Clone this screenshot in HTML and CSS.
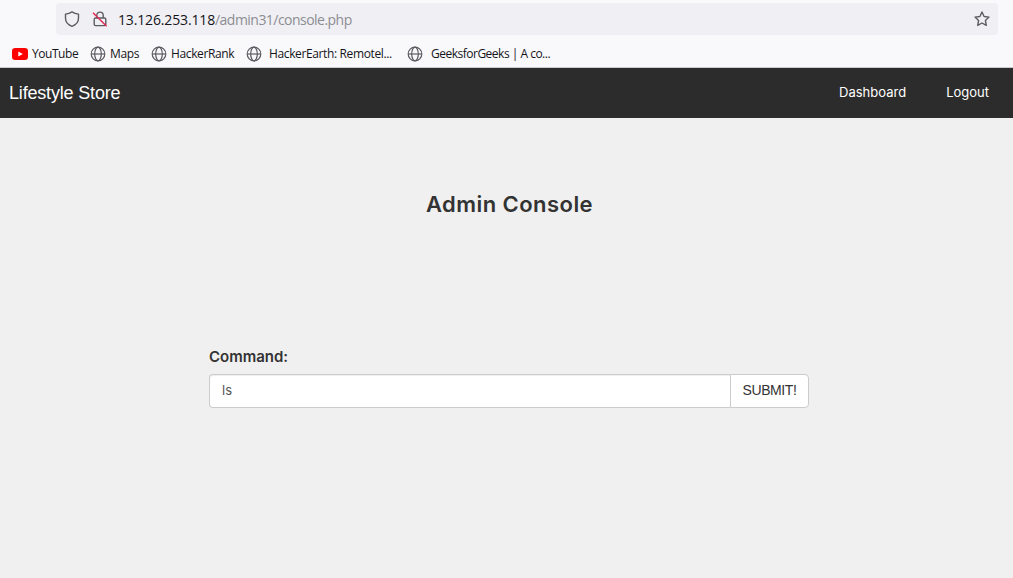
FILE: index.html
```
<!DOCTYPE html>
<html lang="en">
<head>
<meta charset="utf-8">
<title>Admin Console</title>
<link rel="stylesheet" href="styles.css">
</head>
<body>
<svg class="defs" aria-hidden="true">
  <symbol id="globe" viewBox="0 0 16 16"><g fill="none" stroke="#5b5b62" stroke-width="1.2"><circle cx="8" cy="8" r="6.8"/><ellipse cx="8" cy="8" rx="3.3" ry="6.8"/><path d="M1.2 8h13.600"/></g></symbol>
</svg>
<div class="toolbar">
  <div class="urlbar">
    <svg class="shield" viewBox="0 0 16 16"><path d="M8 .9c2 1.400 4 2 6.500 2.200v3.900c0 4-2.500 6.900-6.500 8.300C4 13.900 1.500 11 1.500 7V3.100C4 2.900 6 2.300 8 .9z"/></svg>
    <svg class="lock" viewBox="0 0 16 16"><path d="M4.800 7V4.300a3.200 3.200 0 0 1 6.400 0V7M3.600 7h8.800q1.400 0 1.400 1.400v4.800q0 1.400-1.400 1.400H3.600q-1.400 0-1.400-1.400V8.400Q2.200 7 3.600 7z"/><path class="slash" d="M1 1.800l13.600 13.400"/></svg>
    <div class="address"><span class="host">13.126.253.118</span><span class="path">/admin31/console.php</span></div>
    <svg class="star" viewBox="0 0 16 16"><path d="M8 1l2.100 4.500 4.900.6-3.600 3.400.9 4.900L8 12l-4.300 2.400.9-4.900L1 6.100l4.900-.6z"/></svg>
  </div>
</div>
<div class="bookmarks">
  <div class="bookmark youtube"><svg viewBox="0 0 16 16"><rect y="2" width="16" height="12" rx="3.200" fill="#f00"/><path d="M6.300 5.400v5.200L10.800 8z" fill="#fff"/></svg><span>YouTube</span></div>
  <div class="bookmark maps"><svg><use href="#globe"/></svg><span>Maps</span></div>
  <div class="bookmark rank"><svg><use href="#globe"/></svg><span>HackerRank</span></div>
  <div class="bookmark earth"><svg><use href="#globe"/></svg><span>HackerEarth: Remotel...</span></div>
  <div class="bookmark geeks"><svg><use href="#globe"/></svg><span>GeeksforGeeks | A co...</span></div>
</div>
<nav class="navbar">
  <span class="brand">Lifestyle Store</span>
  <div class="links"><span class="dashboard">Dashboard</span><span class="logout">Logout</span></div>
</nav>
<main class="content">
  <h1 class="title">Admin Console</h1>
  <form class="console">
    <label class="label" for="command">Command:</label>
    <div class="group"><input class="input" id="command" type="text" value="ls"><button class="submit" type="button">SUBMIT!</button></div>
  </form>
</main>
</body>
</html>
```
FILE: styles.css
```
* { box-sizing: border-box; }
body { margin: 0; height: 578px; overflow: hidden; background: #f0f0f0; color: #333; font-family: Inter, "Liberation Sans", sans-serif; }
.defs { display: none; }
.toolbar { height: 38px; padding: 3px 15px 0 56px; background: #f9f9fb; }
.urlbar { display: flex; align-items: center; height: 32px; padding: 0 8px; border-radius: 4px; background: #f0f0f4; font: 14px/20px "Open Sans", "Noto Sans", sans-serif; }
.urlbar svg { width: 16px; height: 16px; flex: none; fill: none; stroke: #5b5b62; stroke-width: 1.4; stroke-linejoin: round; }
.urlbar .lock { margin-left: 12px; }
.urlbar .slash { stroke: #e22850; }
.address { margin-left: 10px; padding-top: 2px; white-space: nowrap; }
.host { color: #15141a; letter-spacing: -0.15px; }
.path { color: #8c8c92; letter-spacing: -0.53px; }
.urlbar .star { margin-left: auto; }
.bookmarks { display: flex; align-items: center; height: 30px; padding: 2px 0 0 12px; background: #f9f9fb; border-bottom: 1px solid #ccccd0; color: #15141a; font: 12px/16px "Open Sans", "Noto Sans", sans-serif; }
.bookmark { display: flex; align-items: center; gap: 4px; white-space: nowrap; flex: none; letter-spacing: -0.37px; }
.bookmark svg { width: 16px; height: 16px; flex: none; }
.youtube { width: 78px; letter-spacing: -0.45px; }
.maps { width: 61px; }
.rank { width: 95px; }
.earth { width: 160px; gap: 7px; }
.geeks { gap: 8px; padding-left: 1px; letter-spacing: -0.5px; }
.navbar { display: flex; align-items: center; justify-content: space-between; height: 50px; padding: 0 24px 0 9px; background: #2c2c2c; color: #fff; }
.brand { font: 18px/20px "Liberation Sans", sans-serif; letter-spacing: -0.18px; }
.links { display: flex; gap: 40px; font-size: 13px; line-height: 20px; padding-bottom: 2px; }
.content { padding: 69px 204px 0 209px; }
.title { margin: 0 0 0 5px; text-align: center; font-size: 22px; line-height: 34px; font-weight: 600; width: 591px; letter-spacing: 0.45px; }
.console { margin-top: 125px; }
.label { display: block; height: 28px; font-size: 15px; line-height: 22px; font-weight: 600; }
.group { display: flex; height: 34px; }
.input { width: 521px; padding: 0 12px 2px; border: 1px solid #ccc; border-right: 0; border-radius: 4px 0 0 4px; background: #fff; color: #555; box-shadow: inset 0 1px 1px rgba(0, 0, 0, .075); font: 13px/20px Inter, sans-serif; }
.submit { width: 79px; padding: 0 0 2px; border: 1px solid #ccc; border-radius: 0 4px 4px 0; background: #fff; color: #333; font: 14px/20px "Liberation Sans", sans-serif; letter-spacing: -0.4px; }
```
